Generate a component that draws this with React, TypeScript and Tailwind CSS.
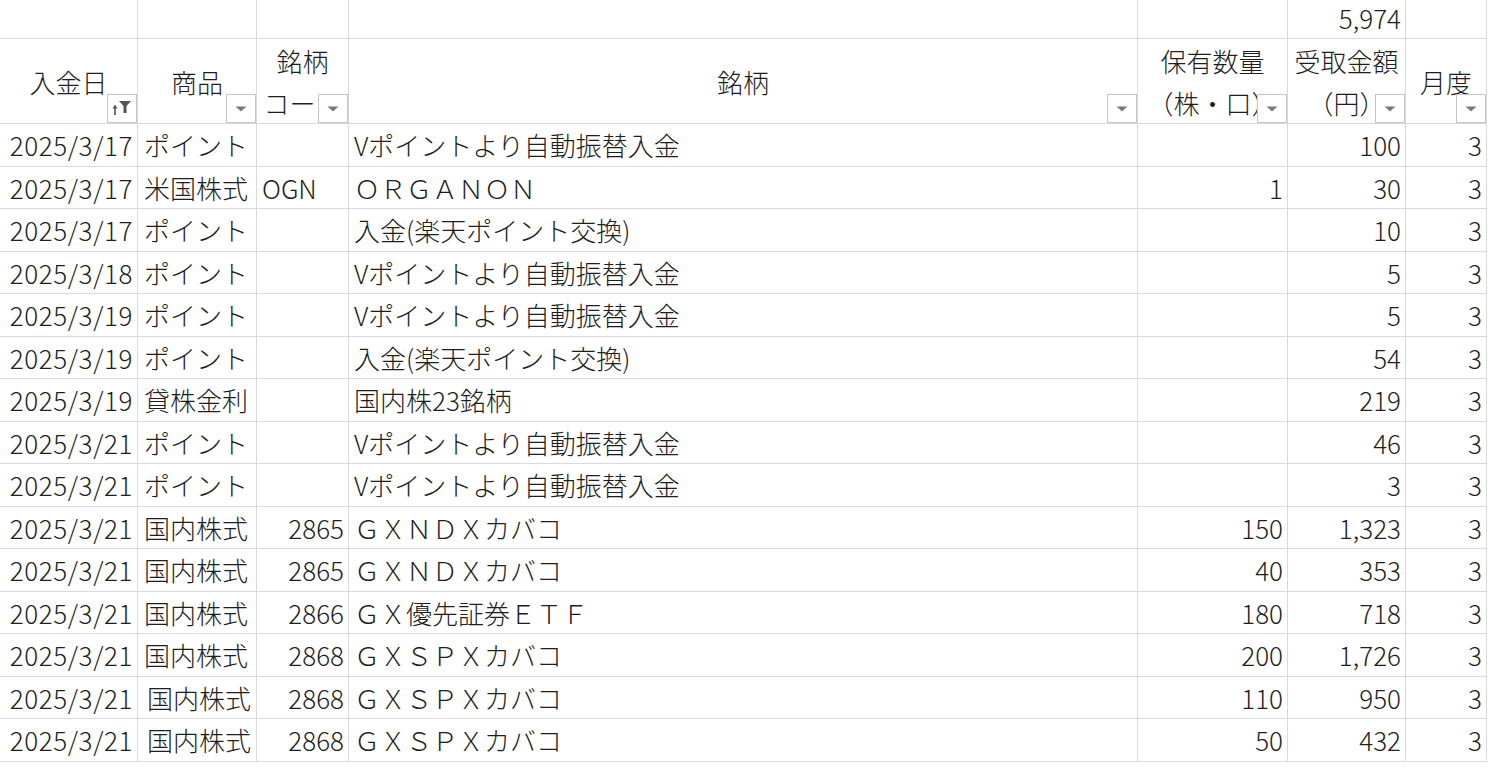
import React from "react";

type Row = {
	date: string;
	kind: string;
	code: string;
	name: string;
	qty: string;
	amount: string;
	month: string;
	kindPad?: boolean;
};

const rows: Row[] = [
	{ date: "2025/3/17", kind: "ポイント", code: "", name: "Vポイントより自動振替入金", qty: "", amount: "100", month: "3" },
	{ date: "2025/3/17", kind: "米国株式", code: "OGN", name: "ＯＲＧＡＮＯＮ", qty: "1", amount: "30", month: "3" },
	{ date: "2025/3/17", kind: "ポイント", code: "", name: "入金(楽天ポイント交換)", qty: "", amount: "10", month: "3" },
	{ date: "2025/3/18", kind: "ポイント", code: "", name: "Vポイントより自動振替入金", qty: "", amount: "5", month: "3" },
	{ date: "2025/3/19", kind: "ポイント", code: "", name: "Vポイントより自動振替入金", qty: "", amount: "5", month: "3" },
	{ date: "2025/3/19", kind: "ポイント", code: "", name: "入金(楽天ポイント交換)", qty: "", amount: "54", month: "3" },
	{ date: "2025/3/19", kind: "貸株金利", code: "", name: "国内株23銘柄", qty: "", amount: "219", month: "3" },
	{ date: "2025/3/21", kind: "ポイント", code: "", name: "Vポイントより自動振替入金", qty: "", amount: "46", month: "3" },
	{ date: "2025/3/21", kind: "ポイント", code: "", name: "Vポイントより自動振替入金", qty: "", amount: "3", month: "3" },
	{ date: "2025/3/21", kind: "国内株式", code: "2865", name: "ＧＸＮＤＸカバコ", qty: "150", amount: "1,323", month: "3" },
	{ date: "2025/3/21", kind: "国内株式", code: "2865", name: "ＧＸＮＤＸカバコ", qty: "40", amount: "353", month: "3" },
	{ date: "2025/3/21", kind: "国内株式", code: "2866", name: "ＧＸ優先証券ＥＴＦ", qty: "180", amount: "718", month: "3" },
	{ date: "2025/3/21", kind: "国内株式", code: "2868", name: "ＧＸＳＰＸカバコ", qty: "200", amount: "1,726", month: "3" },
	{ date: "2025/3/21", kind: "国内株式", code: "2868", name: "ＧＸＳＰＸカバコ", qty: "110", amount: "950", month: "3", kindPad: true },
	{ date: "2025/3/21", kind: "国内株式", code: "2868", name: "ＧＸＳＰＸカバコ", qty: "50", amount: "432", month: "3", kindPad: true },
];

const cell = "border-r border-b border-[#d9d9d9] flex items-center overflow-hidden whitespace-nowrap";

// filter dropdown button in the header cell
const FilterButton = ({ sorted = false }: { sorted?: boolean }) => {
	return (
		<div className="absolute right-0 bottom-0 w-[30px] h-[29px] border border-[#c6c6c6] bg-white flex items-center justify-center">
			{sorted ? (
				<svg width="28" height="27" viewBox="0 0 28 27">
					<path d="M7 20V12" stroke="#555" strokeWidth="1.6" />
					<path d="M4.5 13.5L7 9.5L9.5 13.5Z" fill="#555" />
					<path d="M11 6H23L18.5 11V18L15.5 18V11Z" fill="#555" />
				</svg>
			) : (
				<svg width="14" height="9" viewBox="0 0 14 9">
					<path d="M1.5 2.5H12.5L7 7.5Z" fill="#7a7a7a" />
				</svg>
			)}
		</div>
	);
};

const HeaderCell = ({
	lines,
	sorted,
}: {
	lines: string[];
	sorted?: boolean;
}) => {
	return (
		<div className={`${cell} relative h-[85px] justify-center`}>
			<div className="flex flex-col items-center leading-[42px] pt-[2px]">
				{lines.map((l) => (
					<span key={l}>{l}</span>
				))}
			</div>
			<FilterButton sorted={sorted} />
		</div>
	);
};

const App = () => {
	return (
		<div className="w-[1500px] h-[776px] bg-white overflow-hidden font-['Noto_Sans_CJK_JP','Noto_Sans_CJK_SC',sans-serif] font-light text-[26px] text-[#1e1e1e]">
			<div className="grid grid-cols-[138px_119px_92px_789px_150px_118px_81px] w-[1487px]">
				{/* top total row */}
				<div className={`${cell} h-[39px]`} />
				<div className={`${cell} h-[39px]`} />
				<div className={`${cell} h-[39px]`} />
				<div className={`${cell} h-[39px]`} />
				<div className={`${cell} h-[39px]`} />
				<div className={`${cell} h-[39px] justify-end pr-[4px] pb-[3px] leading-[30px]`}>5,974</div>
				<div className={`${cell} h-[39px]`} />

				{/* header */}
				<HeaderCell lines={["入金日"]} sorted />
				<HeaderCell lines={["商品"]} />
				<HeaderCell lines={["銘柄", "コード"]} />
				<HeaderCell lines={["銘柄"]} />
				<HeaderCell lines={["保有数量", "（株・口）"]} />
				<HeaderCell lines={["受取金額", "（円）"]} />
				<HeaderCell lines={["月度"]} />

				{rows.map((r, i) => (
					<React.Fragment key={i}>
						<div className={`${cell} h-[42.5px] justify-end pr-[4px] tracking-[0.6px]`}>{r.date}</div>
						<div className={`${cell} h-[42.5px] ${r.kindPad ? "pl-[9px]" : "pl-[6px]"}`}>{r.kind}</div>
						<div className={`${cell} h-[42.5px] ${r.code === "OGN" ? "pl-[5px]" : "justify-end pr-[4px]"}`}>{r.code}</div>
						<div className={`${cell} h-[42.5px] pl-[5px]`}>{r.name}</div>
						<div className={`${cell} h-[42.5px] justify-end pr-[4px]`}>{r.qty}</div>
						<div className={`${cell} h-[42.5px] justify-end pr-[4px]`}>{r.amount}</div>
						<div className={`${cell} h-[42.5px] justify-end pr-[4px]`}>{r.month}</div>
					</React.Fragment>
				))}
			</div>
		</div>
	);
};

export default App;
